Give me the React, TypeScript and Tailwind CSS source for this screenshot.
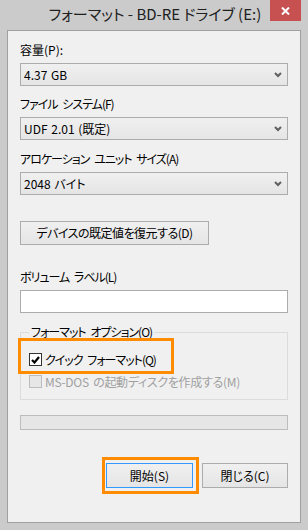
import React from 'react';

const font = "font-['Noto_Sans_CJK_JP','Noto_Sans',sans-serif] [font-feature-settings:'palt']";

function Chevron() {
  return (
    <svg width="8" height="6" viewBox="0 0 8 6" className="text-[#606060]">
      <path d="M1 1l3 3 3-3" fill="none" stroke="currentColor" strokeWidth="2" />
    </svg>
  );
}

function Combo({ value }: { value: string }) {
  return (
    <div className="h-[23px] flex items-center justify-between border border-[#acacac] bg-gradient-to-b from-[#f0f0f0] to-[#e5e5e5] pl-[3px] pr-[5px] text-[12px] leading-[16px] text-black">
      <span className="[word-spacing:1px]">{value}</span>
      <Chevron />
    </div>
  );
}

function Label({ text, tight }: { text: string; tight?: boolean }) {
  return (
    <div
      className={`h-[16px] text-[12px] leading-[16px] text-black mb-[5px] ${
        tight ? 'tracking-[-1px] [word-spacing:3px]' : ''
      }`}
    >
      {text}
    </div>
  );
}

export default function App() {
  return (
    <div className={`w-[308px] h-[530px] bg-[#cbcbcb] flex flex-col relative ${font}`}>
      {/* title bar */}
      <div className="h-[30px] shrink-0 flex items-center justify-center pl-[2px] pb-[2px]">
        <span className="text-[15px] leading-[20px] text-[#202020]">フォーマット - BD-RE ドライブ (E:)</span>
      </div>
      <div className="absolute top-0 right-[7px] w-[31px] h-[21px] bg-[#c75050] flex items-center justify-center">
        <svg width="9" height="8" viewBox="0 0 9 8">
          <path d="M1 0.5l7 7M8 0.5l-7 7" stroke="white" strokeWidth="2" />
        </svg>
      </div>

      {/* client area */}
      <div className="flex-1 mx-[7px] mb-[7px] border border-[#a0a0a0] bg-[#f0f0f0] px-[12px] pt-[11px] flex flex-col relative">
        <Label text="容量(P):" />
        <Combo value="4.37 GB" />

        <div className="mt-[10px]">
          <Label text="ファイル システム(F)" tight />
          <Combo value="UDF 2.01 (既定)" />
        </div>

        <div className="mt-[11px]">
          <Label text="アロケーション ユニット サイズ(A)" tight />
          <Combo value="2048 バイト" />
        </div>

        <button className="mt-[26px] w-[189px] h-[24px] border border-[#acacac] bg-gradient-to-b from-[#f0f0f0] to-[#e5e5e5] text-[12px] leading-[16px] text-black tracking-[-0.5px] flex items-center justify-center">
          デバイスの既定値を復元する(D)
        </button>

        <div className="mt-[24px]">
          <Label text="ボリューム ラベル(L)" tight />
          <div className="h-[23px] border border-[#acacac] bg-white" />
        </div>

        {/* group box */}
        <div className="mt-[19px] h-[68px] border border-[#dcdcdc] relative px-[8px] pt-[20px] flex flex-col gap-[9px]">
          <span className="absolute -top-[9px] left-[8px] px-[2px] bg-[#f0f0f0] text-[12px] leading-[16px] text-black tracking-[-1px] [word-spacing:3px]">
            フォーマット オプション(O)
          </span>
          <div className="flex items-center gap-[3px] h-[13px]">
            <div className="w-[13px] h-[13px] border border-[#333333] bg-white flex items-center justify-center">
              <svg width="9" height="8" viewBox="0 0 9 8">
                <path d="M1 4l2.5 2.5L8 1" fill="none" stroke="black" strokeWidth="2.2" />
              </svg>
            </div>
            <span className="text-[12px] leading-[16px] text-black tracking-[-1px] [word-spacing:3px]">
              クイック フォーマット(Q)
            </span>
          </div>
          <div className="flex items-center gap-[3px] h-[13px]">
            <div className="w-[13px] h-[13px] border border-[#bcbcbc] bg-[#e6e6e6]" />
            <span className="text-[12px] leading-[16px] text-[#a0a0a0] tracking-[-0.3px] [word-spacing:2px]">
              MS-DOS の起動ディスクを作成する(M)
            </span>
          </div>
        </div>

        {/* progress */}
        <div className="mt-[15px] h-[15px] border border-[#bcbcbc] bg-[#e6e6e6]" />

        {/* buttons */}
        <div className="mt-[33px] flex justify-end gap-[9px]">
          <button className="w-[87px] h-[25px] border border-[#3399ff] bg-gradient-to-b from-[#f0f0f0] to-[#e5e5e5] text-[12px] leading-[16px] text-black">
            開始(S)
          </button>
          <button className="w-[86px] h-[25px] border border-[#acacac] bg-gradient-to-b from-[#f0f0f0] to-[#e5e5e5] text-[12px] leading-[16px] text-black">
            閉じる(C)
          </button>
        </div>
      </div>

      {/* highlight boxes */}
      <div className="absolute left-[18px] top-[338px] w-[156px] h-[36px] border-[3px] border-[#ff8c00] pointer-events-none" />
      <div className="absolute left-[102px] top-[457px] w-[97px] h-[37px] border-[3px] border-[#ff8c00] pointer-events-none" />
    </div>
  );
}
